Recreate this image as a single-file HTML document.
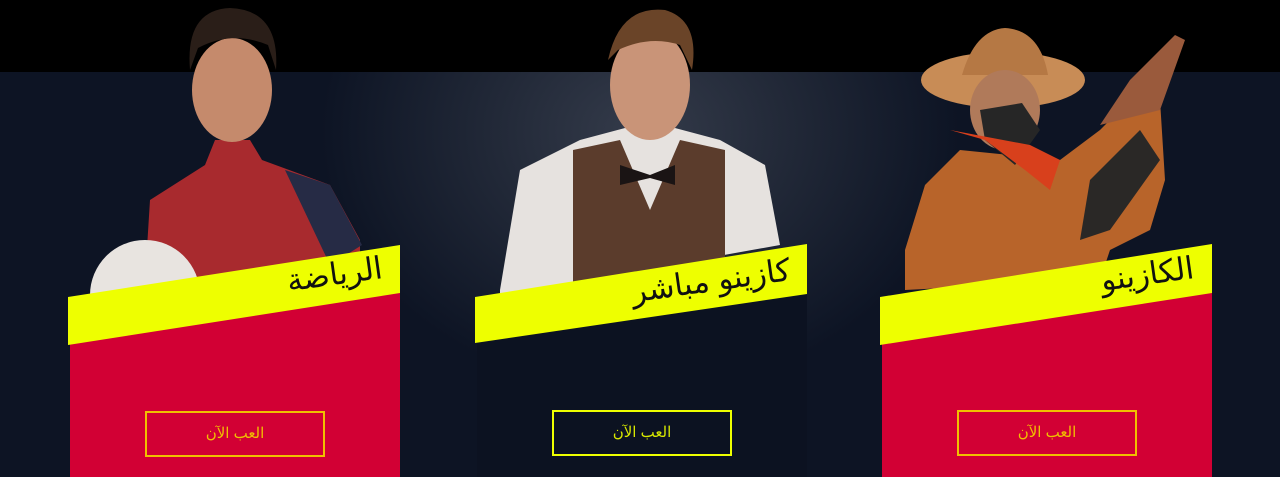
<!DOCTYPE html>
<html><head><meta charset="utf-8"><style>
html,body{margin:0;padding:0}
body{width:1280px;height:477px;position:relative;overflow:hidden;background:#0d1424;font-family:"Liberation Sans","Noto Sans CJK SC",sans-serif}
.top{position:absolute;left:0;top:0;width:1280px;height:72px;background:#000}
.bg{position:absolute;left:0;top:72px;width:1280px;height:405px;background:radial-gradient(ellipse 320px 260px at 640px 60px,#343b4a 0%,#222938 45%,#0d1424 100%)}
svg{position:absolute;left:0;top:0}
.t{position:absolute;font-size:31px;color:#111;direction:rtl;white-space:nowrap;transform:rotate(-8deg);transform-origin:right center}
.btn{position:absolute;width:180px;height:46px;border:2px solid #f0e000;box-sizing:border-box;text-align:center;line-height:42px;font-size:15px;direction:rtl}
</style></head><body>
<div class="top"></div>
<div class="bg"></div>
<svg width="1280" height="477">
<path d="M145 280 L150 200 L205 165 L215 140 L250 140 L262 160 L330 185 L360 240 L360 280 Z" fill="#a82a2e"/>
<path d="M285 170 L330 185 L362 245 L330 265 Z" fill="#262b45"/>
<ellipse cx="232" cy="90" rx="40" ry="52" fill="#c58a6c"/>
<path d="M190 70 Q185 10 230 8 Q280 10 276 70 L268 45 Q232 30 198 48 Z" fill="#2a1e18"/>
<circle cx="145" cy="295" r="55" fill="#e8e4e0"/>
<path d="M500 290 L520 170 L580 140 L625 128 L675 128 L720 140 L765 165 L780 245 L500 295 Z" fill="#e6e2df"/>
<path d="M573 150 L620 140 L650 210 L680 140 L725 150 L725 280 L573 290 Z" fill="#5b3c2c"/>
<path d="M620 165 L650 175 L675 165 L675 185 L650 178 L620 185 Z" fill="#1a1414"/>
<ellipse cx="650" cy="85" rx="40" ry="55" fill="#c99478"/>
<path d="M608 60 Q620 5 665 10 Q700 20 692 70 L680 45 Q650 35 618 50 Z" fill="#6a4428"/>
<path d="M905 250 L925 185 L960 150 L1060 160 L1100 130 L1140 90 L1160 100 L1165 180 L1150 230 L1110 250 L1100 280 L905 290 Z" fill="#b8642a"/>
<path d="M1100 125 L1130 80 L1150 60 L1175 35 L1185 40 L1160 110 Z" fill="#9a5a3c"/>
<path d="M1090 180 L1140 130 L1160 160 L1110 230 L1080 240 Z" fill="#2a2826"/>
<ellipse cx="1003" cy="80" rx="82" ry="28" fill="#c88c56"/>
<path d="M962 75 Q975 30 1005 28 Q1040 30 1048 75 Z" fill="#b57844"/>
<ellipse cx="1005" cy="110" rx="35" ry="40" fill="#b07a5a"/>
<path d="M980 110 L1022 103 L1040 130 L1015 165 L985 140 Z" fill="#262626"/>
<path d="M950 130 L985 140 L1025 170 L1050 190 L1060 160 L1030 145 Z" fill="#d8401c"/>
<polygon points="70,343 400,290 400,477 70,477" fill="#d20034"/>
<polygon points="68,297 400,245 400,293 68,345" fill="#eeff00"/>
<polygon points="477,340 807,292 807,477 477,477" fill="#0c1221"/>
<polygon points="475,297 807,244 807,294 475,343" fill="#eeff00"/>
<polygon points="882,343 1212,291 1212,477 882,477" fill="#d20034"/>
<polygon points="880,297 1212,244 1212,293 880,345" fill="#eeff00"/>
</svg>
<div class="t" style="right:898px;top:250px">الرياضة</div>
<div class="t" style="right:490px;top:252px">كازينو مباشر</div>
<div class="t" style="right:86px;top:250px">الكازينو</div>
<div class="btn" style="left:145px;top:411px;color:#f0c000;border-color:#f0c000">العب الآن</div>
<div class="btn" style="left:552px;top:410px;color:#d8e800;border-color:#eeff00">العب الآن</div>
<div class="btn" style="left:957px;top:410px;color:#f0c000;border-color:#f0c000">العب الآن</div>
</body></html>
